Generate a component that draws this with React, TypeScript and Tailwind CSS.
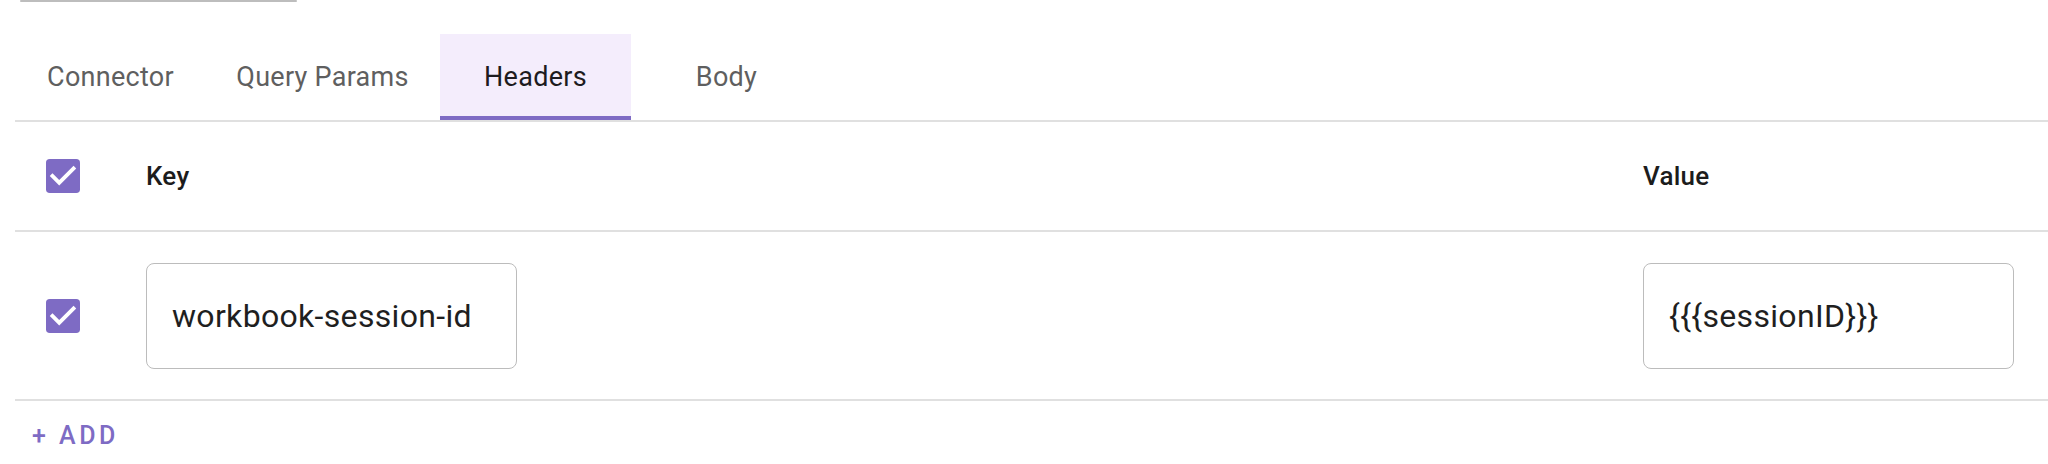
//@ts-nocheck
import { useState } from "react";

const tabs = [
  { id: "connector", label: "Connector", w: "w-[189px]" },
  { id: "query", label: "Query Params", w: "w-[235px]" },
  { id: "headers", label: "Headers", w: "w-[191px]" },
  { id: "body", label: "Body", w: "w-[191px]" },
];

function CheckBox({ checked, onChange }) {
  return (
    <button
      type="button"
      role="checkbox"
      aria-checked={checked}
      onClick={onChange}
      className="w-[34px] h-[34px] flex-none"
    >
      <svg viewBox="3 3 18 18" width="34" height="34" aria-hidden="true">
        {checked ? (
          <>
            <rect x="3" y="3" width="18" height="18" rx="2" fill="#7e6bc4" />
            <path
              fill="#ffffff"
              d="M10 17l-5-5 1.41-1.41L10 14.17l7.59-7.59L19 8l-9 9z"
            />
          </>
        ) : (
          <rect
            x="4"
            y="4"
            width="16"
            height="16"
            rx="2"
            fill="none"
            stroke="#757575"
            strokeWidth="2"
          />
        )}
      </svg>
    </button>
  );
}

export default function App() {
  const [active, setActive] = useState("headers");
  const [rows, setRows] = useState([
    { key: "workbook-session-id", value: "{{{sessionID}}}", on: true },
  ]);

  const allOn = rows.every((r) => r.on);

  return (
    <div className="w-[2048px] h-[464px] overflow-hidden bg-white font-['Roboto',sans-serif]">
      <div className="ml-[20px] w-[277px] h-[2px] bg-[#bdbdbd] rounded-full" />

      <div className="ml-[15px] mt-[32px] flex border-b-2 border-[#e0e0e0]">
        <div className="flex pl-px">
          {tabs.map((t) => {
            const on = t.id === active;
            return (
              <button
                key={t.id}
                type="button"
                onClick={() => setActive(t.id)}
                className={`${t.w} h-[86px] flex items-center justify-center text-[27px] tracking-[0.01em] leading-none border-b-4 pt-1 ${
                  on
                    ? "bg-[#f4edfc] text-[#1d1b20] border-[#7e6bc4]"
                    : "text-[#5f5f5f] border-transparent"
                }`}
              >
                {t.label}
              </button>
            );
          })}
        </div>
      </div>

      <div className="ml-[15px]">
        <div className="grid grid-cols-[131px_1fr_405px] h-[110px] items-center border-b-2 border-[#e0e0e0]">
          <div className="pl-[31px] flex">
            <CheckBox
              checked={allOn}
              onChange={() =>
                setRows((prev) => prev.map((r) => ({ ...r, on: !allOn })))
              }
            />
          </div>
          <div className="text-[26px] tracking-[0.01em] font-medium text-[#1c1c1c]">
            Key
          </div>
          <div className="text-[26px] tracking-[0.01em] font-medium text-[#1c1c1c]">
            Value
          </div>
        </div>

        {rows.map((r, i) => (
          <div
            key={i}
            className="grid grid-cols-[131px_1fr_405px] h-[169px] items-center border-b-2 border-[#e0e0e0]"
          >
            <div className="pl-[31px] flex">
              <CheckBox
                checked={r.on}
                onChange={() =>
                  setRows((prev) =>
                    prev.map((x, j) => (j === i ? { ...x, on: !x.on } : x))
                  )
                }
              />
            </div>
            <div>
              <div className="w-[371px] h-[106px] flex items-center pl-[25px] border-[1.5px] border-[#bcbcbc] rounded-[8px] text-[32px] tracking-[0.01em] text-[#1f1f1f]">
                {r.key}
              </div>
            </div>
            <div>
              <div className="w-[371px] h-[106px] flex items-center pl-[25px] border-[1.5px] border-[#bcbcbc] rounded-[8px] text-[32px] tracking-[0.01em] text-[#1f1f1f]">
                {r.value}
              </div>
            </div>
          </div>
        ))}

        <div className="h-[63px] flex items-center pt-[6px] pl-[17px]">
          <button
            type="button"
            onClick={() =>
              setRows((prev) => [...prev, { key: "", value: "", on: true }])
            }
            className="text-[25px] font-medium tracking-[0.14em] text-[#7e6bc4] leading-none"
          >
            + ADD
          </button>
        </div>
      </div>
    </div>
  );
}
